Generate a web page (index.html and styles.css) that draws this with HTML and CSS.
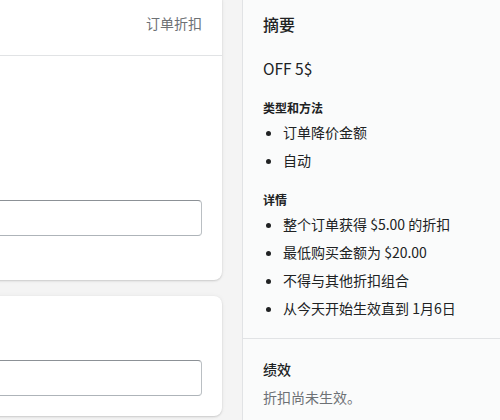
FILE: index.html
```html
<!DOCTYPE html>
<html lang="zh-CN">
<head>
<meta charset="utf-8">
<title>订单折扣</title>
<link rel="stylesheet" href="styles.css">
</head>
<body>
<div class="layout">
  <main class="main">
    <section class="card">
      <div class="card-header">
        <span class="card-header-label">订单折扣</span>
      </div>
      <div class="card-body card-body-first">
        <div class="input"></div>
      </div>
    </section>
    <section class="card">
      <div class="card-body card-body-second">
        <div class="input"></div>
      </div>
    </section>
  </main>
  <aside class="summary">
    <div class="summary-section">
      <h2 class="summary-title">摘要</h2>
      <p class="summary-code">OFF 5$</p>
      <h3 class="summary-subtitle">类型和方法</h3>
      <ul class="summary-list">
        <li>订单降价金额</li>
        <li>自动</li>
      </ul>
      <h3 class="summary-subtitle">详情</h3>
      <ul class="summary-list">
        <li>整个订单获得 $5.00 的折扣</li>
        <li>最低购买金额为 $20.00</li>
        <li>不得与其他折扣组合</li>
        <li>从今天开始生效直到 1月6日</li>
      </ul>
    </div>
    <div class="summary-section">
      <h3 class="perf-title">绩效</h3>
      <p class="perf-text">折扣尚未生效。</p>
    </div>
  </aside>
</div>
</body>
</html>
```

FILE: styles.css
```css
html, body {
  margin: 0;
  padding: 0;
}

body {
  background: #f4f4f4;
  font-family: "Noto Sans CJK SC", "Noto Sans", sans-serif;
  color: #202223;
  overflow: hidden;
  height: 420px;
}

.layout {
  display: flex;
  gap: 20px;
  margin-top: -7px;
  min-height: 440px;
}

.main {
  flex: 1;
  margin-left: -200px;
  display: flex;
  flex-direction: column;
  gap: 16px;
}

.card {
  background: #ffffff;
  border-radius: 8px;
  box-shadow: 0 0 5px rgba(23, 24, 24, 0.05), 0 1px 2px rgba(0, 0, 0, 0.15);
}

.card-header {
  padding: 20px 20px 22px;
  border-bottom: 1px solid #e1e3e5;
  display: flex;
  justify-content: flex-end;
}

.card-header-label {
  font-size: 14px;
  line-height: 20px;
  color: #6d7175;
}

.card-body {
  padding: 0 20px;
}

.card-body-first {
  padding-top: 144px;
  padding-bottom: 44px;
}

.card-body-second {
  padding-top: 64px;
  padding-bottom: 20px;
}

.input {
  height: 34px;
  border: 1px solid #babfc3;
  border-top-color: #8c9196;
  border-bottom-color: #aeb4b9;
  border-radius: 4px;
  background: #ffffff;
}

.summary {
  flex: 0 0 257px;
  background: #fafbfb;
  border-left: 1px solid #e1e3e5;
}

.summary-section {
  padding: 20px;
}

.summary-section + .summary-section {
  border-top: 1px solid #e1e3e5;
}

.summary-title {
  margin: 0;
  font-size: 16px;
  line-height: 22px;
  font-weight: 500;
}

.summary-code {
  margin: 23px 0 0;
  font-size: 15.5px;
  line-height: 20px;
}

.summary-subtitle {
  margin: 22px 0 0;
  font-size: 12px;
  line-height: 16px;
  font-weight: 600;
}

.summary-list {
  margin: 6px 0 0;
  padding-left: 20px;
  display: flex;
  flex-direction: column;
  gap: 8px;
}

.summary-list li {
  font-size: 14px;
  line-height: 20px;
}

.perf-title {
  margin: 0;
  font-size: 14px;
  line-height: 20px;
  font-weight: 500;
}

.perf-text {
  margin: 8px 0 0;
  font-size: 14px;
  line-height: 20px;
  color: #6d7175;
}
```
